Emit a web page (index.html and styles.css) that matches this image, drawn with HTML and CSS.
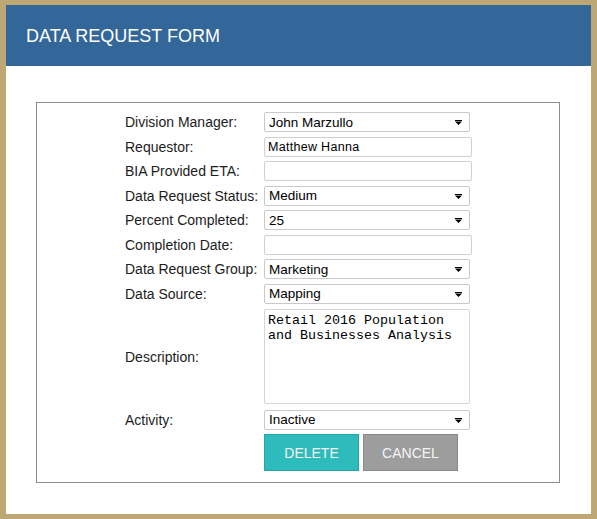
FILE: index.html
```html
<!DOCTYPE html>
<html lang="en">
<head>
<meta charset="utf-8">
<title>Data Request Form</title>
<link rel="stylesheet" href="styles.css">
</head>
<body>
<div class="page">
  <header class="header"><h1 class="title">DATA REQUEST FORM</h1></header>
  <main class="content">
    <div class="panel">
      <form class="form">
        <label class="label">Division Manager:</label>
        <span class="select-wrap"><select class="field select"><option>John Marzullo</option></select><svg class="arrow" width="7" height="5" viewBox="0 0 7 5"><path d="M0 0h7v1H0z M0 1.5h7L3.5 5z" fill="#000"/></svg></span>

        <label class="label">Requestor:</label>
        <input class="field input" type="text" value="Matthew Hanna">

        <label class="label">BIA Provided ETA:</label>
        <input class="field input" type="text" value="">

        <label class="label">Data Request Status:</label>
        <span class="select-wrap"><select class="field select"><option>Medium</option></select><svg class="arrow" width="7" height="5" viewBox="0 0 7 5"><path d="M0 0h7v1H0z M0 1.5h7L3.5 5z" fill="#000"/></svg></span>

        <label class="label">Percent Completed:</label>
        <span class="select-wrap"><select class="field select"><option>25</option></select><svg class="arrow" width="7" height="5" viewBox="0 0 7 5"><path d="M0 0h7v1H0z M0 1.5h7L3.5 5z" fill="#000"/></svg></span>

        <label class="label">Completion Date:</label>
        <input class="field input" type="text" value="">

        <label class="label">Data Request Group:</label>
        <span class="select-wrap"><select class="field select"><option>Marketing</option></select><svg class="arrow" width="7" height="5" viewBox="0 0 7 5"><path d="M0 0h7v1H0z M0 1.5h7L3.5 5z" fill="#000"/></svg></span>

        <label class="label">Data Source:</label>
        <span class="select-wrap"><select class="field select"><option>Mapping</option></select><svg class="arrow" width="7" height="5" viewBox="0 0 7 5"><path d="M0 0h7v1H0z M0 1.5h7L3.5 5z" fill="#000"/></svg></span>

        <label class="label">Description:</label>
        <textarea class="field textarea">Retail 2016 Population and Businesses Analysis</textarea>

        <label class="label">Activity:</label>
        <span class="select-wrap"><select class="field select"><option>Inactive</option></select><svg class="arrow" width="7" height="5" viewBox="0 0 7 5"><path d="M0 0h7v1H0z M0 1.5h7L3.5 5z" fill="#000"/></svg></span>

        <span class="spacer"></span>
        <div class="buttons">
          <button type="button" class="btn btn-delete">DELETE</button>
          <button type="button" class="btn btn-cancel">CANCEL</button>
        </div>
      </form>
    </div>
  </main>
</div>
</body>
</html>
```

FILE: styles.css
```css
html {
  background: #bda773;
}
body {
  margin: 5px 6px;
  background: #ffffff;
  height: 509px;
  font-family: "Liberation Sans", Arial, sans-serif;
  overflow: hidden;
}
.page {
  display: flex;
  flex-direction: column;
  height: 100%;
}
.header {
  flex-shrink: 0;
  height: 61px;
  background: #336699;
  display: flex;
  align-items: center;
  padding-left: 20px;
}
.title {
  margin: 0;
  color: #ffffff;
  font-size: 18px;
  font-weight: normal;
  padding-top: 2px;
}
.content {
  flex-shrink: 0;
  padding: 36px 31px 31px 30px;
}
.panel {
  border: 1px solid #8c8c8c;
  height: 370px;
  padding: 9px 0 0 88px;
}
.form {
  display: grid;
  grid-template-columns: 139px 208px;
  row-gap: 4.5px;
  align-items: center;
}
.label {
  font-size: 14px;
  color: #1c1c1c;
}
.field {
  box-sizing: border-box;
  font-family: "Liberation Sans", Arial, sans-serif;
  font-size: 13px;
  color: #000;
  background: #fff;
  margin: 0;
  outline: none;
}
.select-wrap {
  position: relative;
  display: block;
  width: 206px;
  height: 20px;
}
.select {
  -webkit-appearance: none;
  appearance: none;
  width: 206px;
  height: 20px;
  border: 1px solid #c9c9c9;
  border-radius: 2px;
  padding: 0 0 0 4px;
  font-size: 13.5px;
}
.arrow {
  position: absolute;
  right: 8px;
  top: 8px;
}
.input {
  width: 208px;
  height: 20px;
  border: 1px solid #cfcfd6;
  border-radius: 2px;
  padding: 0 3px;
  font-size: 12.5px;
  letter-spacing: 0.3px;
}
.textarea {
  width: 206px;
  height: 95px;
  border: 1px solid #d4d4dc;
  border-radius: 2px;
  padding: 3px 3px;
  resize: none;
  font-family: "Liberation Mono", "Courier New", monospace;
  font-size: 13.33px;
  line-height: 15px;
  margin-top: 0.5px;
  margin-bottom: 1.5px;
}
.buttons {
  display: flex;
  gap: 4px;
}
.btn {
  width: 95px;
  height: 37px;
  font-family: "Liberation Sans", Arial, sans-serif;
  font-size: 14px;
  color: #f4f4f4;
  cursor: pointer;
  padding: 0;
}
.btn-delete {
  background: #2dbcbb;
  border: 1px solid #25a5a4;
}
.btn-cancel {
  background: #9d9d9d;
  border: 1px solid #888888;
}
```
